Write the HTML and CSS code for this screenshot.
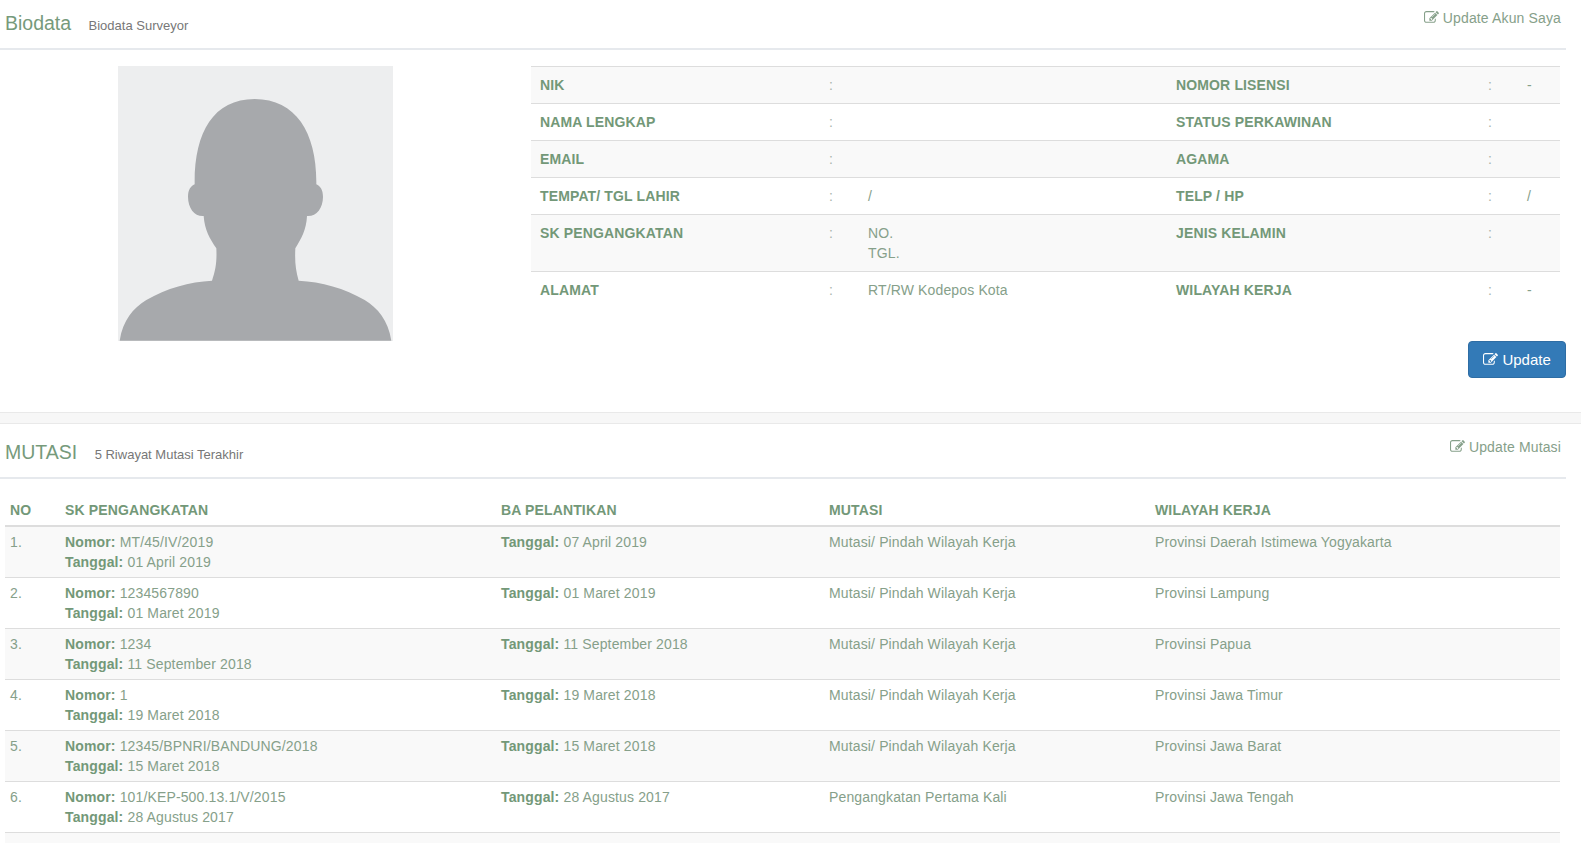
FILE: index.html
```html
<!DOCTYPE html>
<html lang="en">

<head>
    <meta charset="UTF-8">
    <meta name="viewport" content="width=device-width, initial-scale=1.0">
    <title>Biodata Surveyor</title>
    <link rel="stylesheet" href="styles.css">
</head>

<body>

    <!-- Icon used by the update links -->
    <svg class="icon-defs" width="0" height="0">
        <symbol id="icon-edit" viewBox="0 0 1792 1792">
            <path d="M888 1184l116-116-152-152-116 116v56h96v96h56zm440-720q-16-16-33 1l-350 350q-17 17-1 33t33-1l350-350q17-17 1-33zm80 594v190q0 119-84.5 203.5t-203.5 84.5h-832q-119 0-203.5-84.5t-84.5-203.5v-832q0-119 84.5-203.5t203.5-84.5h832q63 0 117 25 15 7 18 23 3 17-9 29l-49 49q-14 14-32 8-23-6-45-6h-832q-66 0-113 47t-47 113v832q0 66 47 113t113 47h832q66 0 113-47t47-113v-126q0-13 9-22l64-64q15-15 35-7t20 29zm-96-738l288 288-672 672h-288v-288zm444 132l-92 92-288-288 92-92q28-28 68-28t68 28l152 152q28 28 28 68t-28 68z"/>
        </symbol>
    </svg>

    <!-- Biodata Section -->
    <section class="panel">
        <div class="panel-head">
            <h2>Biodata <small>Biodata Surveyor</small></h2>
            <a class="head-link" href="#"><svg class="icon"><use href="#icon-edit"/></svg> Update Akun Saya</a>
        </div>
        <div class="biodata">
            <div class="photo-col">
                <svg class="photo" viewBox="355 198 825 825">
                    <rect x="355" y="198" width="825" height="825" fill="#edeeef"/>
                    <path fill="#a7a9ac" d="M360 1022 C370 960 400 925 440 900 C500 865 570 845 637 842 C648 810 652 785 650 745 C630 715 615 690 612 648 C585 650 565 625 565 590 C565 570 573 558 585 553 C583 400 640 297 765 297 C890 297 952 400 950 553 C962 558 970 570 970 590 C970 625 950 650 922 648 C920 690 905 715 887 745 C885 785 888 810 897 842 C965 845 1035 865 1095 900 C1135 925 1165 960 1175 1022 Z"/>
                </svg>
            </div>
            <div class="detail-col">
                <table class="table table-detail">
                    <colgroup>
                        <col class="c-label"><col class="c-colon"><col class="c-value">
                        <col class="c-label2"><col class="c-colon2"><col class="c-value2">
                    </colgroup>
                    <tr>
                        <th>NIK</th><td class="colon">:</td><td></td>
                        <th>NOMOR LISENSI</th><td class="colon">:</td><td>-</td>
                    </tr>
                    <tr>
                        <th>NAMA LENGKAP</th><td class="colon">:</td><td></td>
                        <th>STATUS PERKAWINAN</th><td class="colon">:</td><td></td>
                    </tr>
                    <tr>
                        <th>EMAIL</th><td class="colon">:</td><td></td>
                        <th>AGAMA</th><td class="colon">:</td><td></td>
                    </tr>
                    <tr>
                        <th>TEMPAT/ TGL LAHIR</th><td class="colon">:</td><td>/</td>
                        <th>TELP / HP</th><td class="colon">:</td><td>/</td>
                    </tr>
                    <tr>
                        <th>SK PENGANGKATAN</th><td class="colon">:</td><td>NO.<br>TGL.</td>
                        <th>JENIS KELAMIN</th><td class="colon">:</td><td></td>
                    </tr>
                    <tr>
                        <th>ALAMAT</th><td class="colon">:</td><td>RT/RW Kodepos Kota</td>
                        <th>WILAYAH KERJA</th><td class="colon">:</td><td>-</td>
                    </tr>
                </table>
                <div class="actions">
                    <button class="btn-update"><svg class="icon"><use href="#icon-edit"/></svg> Update</button>
                </div>
            </div>
        </div>
    </section>

    <div class="band"></div>

    <!-- Mutasi Section -->
    <section class="panel panel-mutasi">
        <div class="panel-head">
            <h2>MUTASI <small>5 Riwayat Mutasi Terakhir</small></h2>
            <a class="head-link" href="#"><svg class="icon"><use href="#icon-edit"/></svg> Update Mutasi</a>
        </div>
        <table class="table table-mutasi">
            <colgroup>
                <col class="m-no"><col class="m-sk"><col class="m-ba"><col class="m-mutasi"><col class="m-wilayah">
            </colgroup>
            <thead>
                <tr>
                    <th>NO</th><th>SK PENGANGKATAN</th><th>BA PELANTIKAN</th><th>MUTASI</th><th>WILAYAH KERJA</th>
                </tr>
            </thead>
            <tbody>
                <tr>
                    <td>1.</td>
                    <td><b>Nomor:</b> MT/45/IV/2019<br><b>Tanggal:</b> 01 April 2019</td>
                    <td><b>Tanggal:</b> 07 April 2019</td>
                    <td>Mutasi/ Pindah Wilayah Kerja</td>
                    <td>Provinsi Daerah Istimewa Yogyakarta</td>
                </tr>
                <tr>
                    <td>2.</td>
                    <td><b>Nomor:</b> 1234567890<br><b>Tanggal:</b> 01 Maret 2019</td>
                    <td><b>Tanggal:</b> 01 Maret 2019</td>
                    <td>Mutasi/ Pindah Wilayah Kerja</td>
                    <td>Provinsi Lampung</td>
                </tr>
                <tr>
                    <td>3.</td>
                    <td><b>Nomor:</b> 1234<br><b>Tanggal:</b> 11 September 2018</td>
                    <td><b>Tanggal:</b> 11 September 2018</td>
                    <td>Mutasi/ Pindah Wilayah Kerja</td>
                    <td>Provinsi Papua</td>
                </tr>
                <tr>
                    <td>4.</td>
                    <td><b>Nomor:</b> 1<br><b>Tanggal:</b> 19 Maret 2018</td>
                    <td><b>Tanggal:</b> 19 Maret 2018</td>
                    <td>Mutasi/ Pindah Wilayah Kerja</td>
                    <td>Provinsi Jawa Timur</td>
                </tr>
                <tr>
                    <td>5.</td>
                    <td><b>Nomor:</b> 12345/BPNRI/BANDUNG/2018<br><b>Tanggal:</b> 15 Maret 2018</td>
                    <td><b>Tanggal:</b> 15 Maret 2018</td>
                    <td>Mutasi/ Pindah Wilayah Kerja</td>
                    <td>Provinsi Jawa Barat</td>
                </tr>
                <tr>
                    <td>6.</td>
                    <td><b>Nomor:</b> 101/KEP-500.13.1/V/2015<br><b>Tanggal:</b> 28 Agustus 2017</td>
                    <td><b>Tanggal:</b> 28 Agustus 2017</td>
                    <td>Pengangkatan Pertama Kali</td>
                    <td>Provinsi Jawa Tengah</td>
                </tr>
                <tr class="row-empty">
                    <td colspan="5"></td>
                </tr>
            </tbody>
        </table>
    </section>

</body>

</html>
```

FILE: styles.css
```css
/* General Reset */
body {
    margin: 0;
    font-family: "Liberation Sans", Arial, sans-serif;
    font-size: 14px;
    line-height: 20px;
    letter-spacing: 0.14px;
    background: #fff;
    color: #86a08a;
}

.icon-defs {
    position: absolute;
}

.icon {
    width: 15px;
    height: 15px;
    fill: currentColor;
    vertical-align: -2px;
}

/* Panel Header */
.panel {
    padding-right: 15px;
}

.panel-mutasi {
    padding-top: 5px;
}

.panel-head {
    display: flex;
    justify-content: space-between;
    height: 48px;
    padding: 0 5px 0 5px;
    border-bottom: 2px solid #e6e9ed;
}

.panel-head h2 {
    margin: 12px 0 0;
    font-size: 19.5px;
    line-height: 22px;
    font-weight: normal;
    letter-spacing: 0;
    color: #769a7b;
}

.panel-head small {
    margin-left: 12px;
    font-size: 13px;
    color: #777;
}

.head-link {
    margin-top: 8px;
    color: #86a08a;
    text-decoration: none;
}

/* Biodata Section */
.biodata {
    display: flex;
    padding-top: 16px;
    height: 362px;
    box-sizing: border-box;
}

.photo-col {
    width: 511px;
    margin-right: 20px;
    display: flex;
    justify-content: center;
}

.photo {
    width: 275px;
    height: 275px;
}

.detail-col {
    flex: 1;
}

/* Tables */
.table {
    border-collapse: collapse;
    table-layout: fixed;
}

.table th {
    text-align: left;
    font-weight: bold;
    color: #739878;
}

.table-detail {
    width: 1029px;
}

.table-detail th,
.table-detail td {
    padding: 8px;
    vertical-align: top;
    border-top: 1px solid #ddd;
}

.table-detail th {
    padding-left: 9px;
}

.table-detail tr:nth-child(odd) {
    background: #f9f9f9;
}

.table-detail .colon {
    color: #a9b5ab;
}

.c-label { width: 290px; }
.c-colon { width: 39px; }
.c-value { width: 307px; }
.c-label2 { width: 313px; }
.c-colon2 { width: 39px; }
.c-value2 { width: 41px; }

.actions {
    display: flex;
    justify-content: flex-end;
    margin-top: 33px;
}

.btn-update {
    width: 98px;
    height: 37px;
    padding: 0;
    font-family: inherit;
    font-size: 15px;
    color: #fff;
    background: #337ab7;
    border: 1px solid #2e6da4;
    border-radius: 4px;
}

/* Band between sections */
.band {
    height: 10px;
    background: #f7f7f7;
    border-top: 1px solid #e9e9e9;
    border-bottom: 1px solid #e9e9e9;
}

/* Mutasi Section */
.table-mutasi {
    width: 1555px;
    margin: 10px 0 0 5px;
}

.table-mutasi th {
    padding: 11px 5px 5px;
    border-bottom: 2px solid #ddd;
}

.table-mutasi td {
    padding: 5px;
    vertical-align: top;
    border-bottom: 1px solid #ddd;
}

.table-mutasi b {
    color: #739878;
}

.table-mutasi tbody tr:nth-child(odd) {
    background: #f9f9f9;
}

.table-mutasi .row-empty td {
    height: 10px;
    padding: 0;
    border: none;
}

.m-no { width: 55px; }
.m-sk { width: 436px; }
.m-ba { width: 328px; }
.m-mutasi { width: 326px; }
.m-wilayah { width: 410px; }
```
